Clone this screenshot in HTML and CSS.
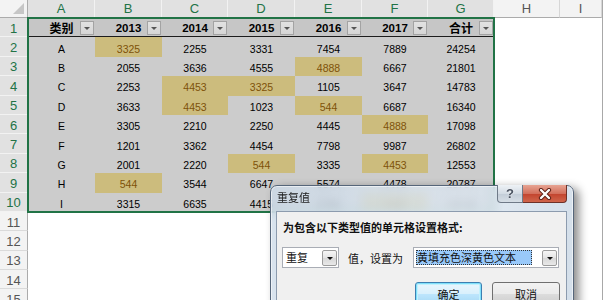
FILE: index.html
```html
<!DOCTYPE html>
<html lang="zh-CN">
<head>
<meta charset="utf-8">
<title>重复值</title>
<link rel="stylesheet" href="styles.css">
</head>
<body>
<div class="sheet">
  <div class="corner"><span class="tri"></span></div>
  <div class="colhead sel">A</div>
  <div class="colhead sel">B</div>
  <div class="colhead sel">C</div>
  <div class="colhead sel">D</div>
  <div class="colhead sel">E</div>
  <div class="colhead sel">F</div>
  <div class="colhead sel">G</div>
  <div class="colhead">H</div>
  <div class="colhead">I</div>

  <div class="rowhead sel">1</div>
  <div class="c th cjk">类别<span class="dd"></span></div>
  <div class="c th">2013<span class="dd"></span></div>
  <div class="c th">2014<span class="dd"></span></div>
  <div class="c th">2015<span class="dd"></span></div>
  <div class="c th">2016<span class="dd"></span></div>
  <div class="c th">2017<span class="dd"></span></div>
  <div class="c th cjk">合计<span class="dd"></span></div>
  <div class="blank"></div>

  <div class="rowhead sel">2</div>
  <div class="c">A</div><div class="c hl">3325</div><div class="c">2255</div><div class="c">3331</div><div class="c">7454</div><div class="c">7889</div><div class="c">24254</div>
  <div class="blank"></div>

  <div class="rowhead sel">3</div>
  <div class="c">B</div><div class="c">2055</div><div class="c">3636</div><div class="c">4555</div><div class="c hl">4888</div><div class="c">6667</div><div class="c">21801</div>
  <div class="blank"></div>

  <div class="rowhead sel">4</div>
  <div class="c">C</div><div class="c">2253</div><div class="c hl">4453</div><div class="c hl">3325</div><div class="c">1105</div><div class="c">3647</div><div class="c">14783</div>
  <div class="blank"></div>

  <div class="rowhead sel">5</div>
  <div class="c">D</div><div class="c">3633</div><div class="c hl">4453</div><div class="c">1023</div><div class="c hl">544</div><div class="c">6687</div><div class="c">16340</div>
  <div class="blank"></div>

  <div class="rowhead sel">6</div>
  <div class="c">E</div><div class="c">3305</div><div class="c">2210</div><div class="c">2250</div><div class="c">4445</div><div class="c hl">4888</div><div class="c">17098</div>
  <div class="blank"></div>

  <div class="rowhead sel">7</div>
  <div class="c">F</div><div class="c">1201</div><div class="c">3362</div><div class="c">4454</div><div class="c">7798</div><div class="c">9987</div><div class="c">26802</div>
  <div class="blank"></div>

  <div class="rowhead sel">8</div>
  <div class="c">G</div><div class="c">2001</div><div class="c">2220</div><div class="c hl">544</div><div class="c">3335</div><div class="c hl">4453</div><div class="c">12553</div>
  <div class="blank"></div>

  <div class="rowhead sel">9</div>
  <div class="c">H</div><div class="c hl">544</div><div class="c">3544</div><div class="c">6647</div><div class="c">5574</div><div class="c">4478</div><div class="c">20787</div>
  <div class="blank"></div>

  <div class="rowhead sel">10</div>
  <div class="c">I</div><div class="c">3315</div><div class="c">6635</div><div class="c">4415</div><div class="c">2786</div><div class="c hl">4888</div><div class="c">22039</div>
  <div class="blank"></div>

  <div class="rowhead">11</div><div class="empty"></div>
  <div class="rowhead">12</div><div class="empty"></div>
  <div class="rowhead">13</div><div class="empty"></div>
  <div class="rowhead">14</div><div class="empty"></div>
  <div class="rowhead">15</div><div class="empty"></div>
</div>

<div class="selection"></div>

<div class="dialog">
  <div class="titlebar">
    <span class="title">重复值</span>
    <div class="caption">
      <span class="cap-help">?</span>
      <span class="cap-close"><svg width="18" height="12" viewBox="0 0 18 12"><path d="M5 2 L13 10 M13 2 L5 10" stroke="#5a1d14" stroke-width="4.2" stroke-linecap="round"/><path d="M5 2 L13 10 M13 2 L5 10" stroke="#ffffff" stroke-width="2.4" stroke-linecap="round"/></svg></span>
    </div>
  </div>
  <div class="client">
    <div class="prompt">为包含以下类型值的单元格设置格式:</div>
    <div class="form-row">
      <div class="combo combo-type"><span class="val">重复</span><span class="arrow"></span></div>
      <span class="lbl">值，设置为</span>
      <div class="combo combo-fmt"><span class="val sel">黄填充色深黄色文本</span><span class="arrow"></span></div>
    </div>
    <div class="buttons">
      <span class="btn default">确定</span>
      <span class="btn">取消</span>
    </div>
  </div>
</div>
</body>
</html>
```

FILE: styles.css
```css
html, body {
  margin: 0;
  padding: 0;
}
body {
  width: 606px;
  height: 300px;
  overflow: hidden;
  background: #ffffff;
  position: relative;
  font-family: "Liberation Sans", "Noto Sans CJK SC", sans-serif;
}

.sheet {
  display: grid;
  grid-template-columns: 28px 67px 67px 66px 67px 67px 66px 66px 66px 42px;
  grid-template-rows: 18px repeat(15, 19.4px);
  width: 602px;
  border-right: 1px solid #a8a8a8;
  background: #ffffff;
}

.corner {
  background: #f3f3f3;
  border-right: 1px solid #ababab;
  border-bottom: 1px solid #ababab;
  box-sizing: border-box;
  display: flex;
  justify-content: flex-end;
  align-items: flex-end;
  padding: 0 3px 3px 0;
}
.corner .tri {
  width: 0;
  height: 0;
  border-left: 11px solid transparent;
  border-bottom: 11px solid #c6c6c6;
}

.colhead {
  background: #f3f3f3;
  border-right: 1px solid #d6d6d6;
  border-bottom: 1px solid #ababab;
  box-sizing: border-box;
  color: #555555;
  font-size: 13px;
  line-height: 18px;
  text-align: center;
}
.colhead.sel {
  background: #e1e1e1;
  color: #217346;
  border-right-color: #f2f2f2;
  border-bottom-color: #217346;
}

.rowhead {
  background: #f3f3f3;
  border-right: 1px solid #ababab;
  border-bottom: 1px solid #dadada;
  box-sizing: border-box;
  color: #555555;
  font-size: 13px;
  display: flex;
  align-items: center;
  justify-content: center;
  padding-top: 2px;
}
.rowhead.sel {
  background: #e1e1e1;
  color: #217346;
  border-right-color: #217346;
  border-bottom-color: #f2f2f2;
}

.c {
  background: #cccccc;
  color: #000000;
  font-size: 10.5px;
  display: flex;
  align-items: center;
  justify-content: center;
  padding-top: 3px;
  box-sizing: border-box;
}
.c.hl {
  background: #ccbc7d;
  color: #7e5209;
}
.c.th {
  background: #c6c6c6;
  font-weight: bold;
  font-size: 11.5px;
  border-bottom: 1px solid #1c1c1c;
  position: relative;
  padding-top: 1px;
}
.c.th.cjk {
  font-family: "Noto Sans CJK SC", sans-serif;
  font-size: 12px;
}
.dd {
  position: absolute;
  right: 1px;
  top: 3px;
  width: 14px;
  height: 14px;
  box-sizing: border-box;
  border: 1px solid #a3a3a3;
  background: linear-gradient(#e2e2e2, #d6d6d6);
}
.dd::after {
  content: "";
  position: absolute;
  left: 3px;
  top: 5px;
  border-left: 3.5px solid transparent;
  border-right: 3.5px solid transparent;
  border-top: 3.5px solid #555555;
}

.blank {
  grid-column: 9 / span 2;
  background: #ffffff;
}
.empty {
  grid-column: 2 / span 9;
  background: #ffffff;
}

.selection {
  position: absolute;
  left: 27px;
  top: 17px;
  width: 468px;
  height: 196px;
  box-sizing: border-box;
  border: 2px solid #217346;
  pointer-events: none;
}

/* Dialog */
.dialog {
  position: absolute;
  left: 270px;
  top: 185px;
  width: 304px;
  height: 140px;
  box-sizing: border-box;
  border: 1px solid #56667a;
  border-radius: 7px 7px 0 0;
  background: linear-gradient(100deg, rgba(204,218,232,0.78), rgba(220,230,240,0.82) 60%, rgba(200,214,228,0.8));
  backdrop-filter: blur(5px);
  box-shadow: 5px 3px 10px rgba(0,0,0,0.45), inset 0 0 0 1px rgba(255,255,255,0.55);
  padding: 0 6px 0 5px;
  display: flex;
  flex-direction: column;
  font-family: "Noto Sans CJK SC", "Liberation Sans", sans-serif;
}
.titlebar {
  height: 25px;
  display: flex;
  align-items: flex-start;
}
.title {
  font-size: 11px;
  line-height: 14px;
  padding: 4px 0 0 1px;
  color: #1a1a1a;
}
.caption {
  margin-left: auto;
  margin-top: -1px;
  display: flex;
}
.cap-help, .cap-close {
  height: 18px;
  box-sizing: border-box;
  display: flex;
  align-items: center;
  justify-content: center;
  font-family: "Liberation Sans", sans-serif;
  font-weight: bold;
}
.cap-help {
  width: 26px;
  border: 1px solid #6f7a88;
  border-top: none;
  border-radius: 0 0 0 4px;
  background: linear-gradient(#eef2f6, #d3dbe4 50%, #c2ccd7 51%, #d6dee6);
  color: #4a5260;
  font-size: 13px;
  text-shadow: 0 0 2px #ffffff;
}
.cap-close {
  width: 44px;
  border: 1px solid #6e3128;
  border-top: none;
  border-left: none;
  border-radius: 0 0 4px 0;
  background: linear-gradient(#e7a493, #d3705c 50%, #c2432d 51%, #d0654b);
}

.client {
  flex: 1;
  background: #f0f0f0;
  border: 1px solid #8c9bae;
  padding: 8px 0 0 6px;
}
.prompt {
  font-size: 11px;
  line-height: 14px;
  font-weight: bold;
  color: #111111;
}
.form-row {
  display: flex;
  align-items: center;
  margin-top: 13px;
  height: 21px;
}
.combo {
  height: 21px;
  box-sizing: border-box;
  border: 1px solid #a9adb5;
  background: #ffffff;
  display: flex;
  align-items: center;
  padding: 1px;
}
.combo-type {
  width: 57px;
  margin-left: -1px;
}
.combo-fmt {
  width: 146px;
  margin-left: 10px;
}
.combo .val {
  flex: 1;
  font-size: 11px;
  line-height: 15px;
  padding-left: 2px;
  color: #111111;
}
.combo .val.sel {
  flex: none;
  width: 115px;
  margin-left: 1px;
  padding-left: 1px;
  background: #99c9fa;
  outline: 1px dotted #333333;
  outline-offset: -1px;
}
.combo-fmt .arrow {
  margin-left: auto;
}
.arrow {
  width: 15px;
  height: 16px;
  box-sizing: border-box;
  border: 1px solid #9c9c9c;
  border-radius: 2px;
  background: linear-gradient(#f6f6f6, #e4e4e4 50%, #d7d7d7 51%, #e8e8e8);
  position: relative;
}
.arrow::after {
  content: "";
  position: absolute;
  left: 3.5px;
  top: 6px;
  border-left: 3px solid transparent;
  border-right: 3px solid transparent;
  border-top: 3px solid #111111;
}
.lbl {
  font-size: 11px;
  margin-left: 9px;
  color: #111111;
}
.buttons {
  display: flex;
  margin-top: 14px;
  margin-left: 132px;
  gap: 10px;
}
.btn {
  width: 67px;
  height: 23px;
  box-sizing: border-box;
  border: 1px solid #707070;
  border-radius: 3px;
  background: linear-gradient(#f2f2f2, #ebebeb 50%, #dddddd 51%, #cfcfcf);
  font-size: 11px;
  display: flex;
  align-items: center;
  justify-content: center;
  color: #111111;
}
.btn + .btn {
  width: 68px;
}
.btn.default {
  border-color: #3c7fb1;
  box-shadow: inset 0 0 0 1px #7fe0fb, inset 0 0 0 2px #c3f1fd;
  background: linear-gradient(#eaf6fd, #d9f0fc 50%, #bee6fd 51%, #a7d9f5);
}
```
